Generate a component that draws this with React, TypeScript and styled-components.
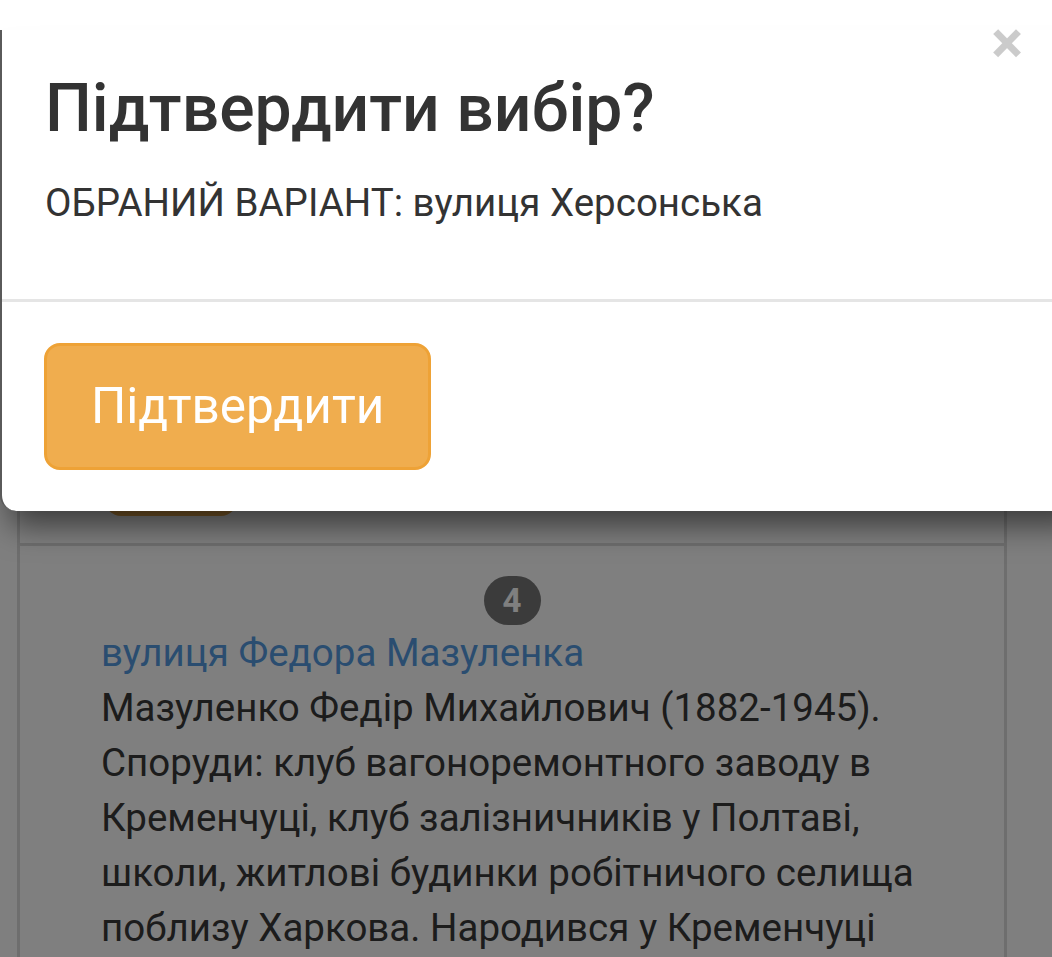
import React from 'react'
import styled, { createGlobalStyle } from 'styled-components'

const GlobalStyle = createGlobalStyle`
  html, body {
    margin: 0;
    padding: 0;
    background: #fff;
    overflow: hidden;
  }
  body {
    font-family: Roboto, "Noto Sans", "Liberation Sans", sans-serif;
    color: #333;
  }
`;

const Page = styled.div`
  display: flex;
  flex-direction: column;
  width: 100%;
  height: 957px;
  overflow: hidden;
  background: #fff;
`;

const TopSpace = styled.div`
  height: 30px;
  flex-shrink: 0;
  background: #fff;
`;

const Viewport = styled.div`
  position: relative;
  flex: 1;
`;

const List = styled.div`
  margin-left: 17px;
  width: 990px;
  display: flex;
  flex-direction: column;
`;

const Item = styled.div<{ $tall?: boolean }>`
  border: 3px solid #ddd;
  border-top-width: ${p => (p.$tall ? 0 : 3)}px;
  margin-top: ${p => (p.$tall ? 0 : -3)}px;
  display: flex;
  flex-direction: column;
  padding: ${p => (p.$tall ? '0 81px 27px 85px' : '30px 81px 40px')};
  min-height: ${p => (p.$tall ? '486px' : 'auto')};
  justify-content: ${p => (p.$tall ? 'flex-end' : 'flex-start')};
`;

const SmallButton = styled.span`
  display: block;
  width: 132px;
  height: 90px;
  background: #f0ad4e;
  border-radius: 16px;
`;

const BadgeRow = styled.div`
  display: flex;
  justify-content: center;
`;

const Badge = styled.span`
  display: inline-block;
  min-width: 19px;
  padding: 8px 19px;
  font-size: 33px;
  font-weight: 700;
  line-height: 1;
  color: #fff;
  text-align: center;
  background: #777;
  border-radius: 28px;
`;

const StreetLink = styled.a`
  color: #559ae0;
  text-decoration: none;
  font-size: 38.5px;
  line-height: 55px;
`;

const Description = styled.p`
  margin: 0;
  font-size: 38.5px;
  line-height: 55px;
  color: #383838;
`;

const Overlay = styled.div`
  position: absolute;
  inset: 0;
  background: rgba(0, 0, 0, 0.5);
`;

const Modal = styled.div`
  position: absolute;
  top: 0;
  left: 0;
  width: 1090px;
  background: #fff;
  border-left: 2px solid #5a5a5a;
  border-radius: 0 0 16px 16px;
  box-shadow: 0 24px 32px -10px rgba(0, 0, 0, 0.55);
`;

const Header = styled.div`
  position: relative;
  padding: 43px 41px 0 43px;
`;

const Title = styled.h4`
  margin: 0;
  font-size: 66px;
  font-weight: 500;
  line-height: 1.1;
  color: #333;
`;

const Close = styled.button`
  position: absolute;
  top: 0;
  right: 69px;
  padding: 0;
  border: 0;
  background: transparent;
  font-family: Roboto, "Liberation Sans", sans-serif;
  font-size: 60px;
  font-weight: 700;
  line-height: 26px;
  color: #000;
  opacity: 0.2;
`;

const Body = styled.div`
  padding: 29px 41px 69px 43px;
`;

const Selected = styled.p`
  margin: 0;
  font-size: 38.5px;
  line-height: 55px;
  color: #333;
`;

const Footer = styled.div`
  border-top: 3px solid #e5e5e5;
  padding: 41px 41px 41px 42px;
  display: flex;
`;

const ConfirmButton = styled.button`
  font-family: Roboto, "Liberation Sans", sans-serif;
  font-size: 49.5px;
  line-height: 66px;
  padding: 27.5px 44px;
  color: #fff;
  background: #f0ad4e;
  border: 3px solid #eea236;
  border-radius: 16px;
  cursor: pointer;
`;

export default function App() {
  return (
    <Page>
      <GlobalStyle />
      <TopSpace />
      <Viewport>
        <List>
          <Item $tall>
            <SmallButton />
          </Item>
          <Item>
            <BadgeRow>
              <Badge>4</Badge>
            </BadgeRow>
            <StreetLink href="#">вулиця Федора Мазуленка</StreetLink>
            <Description>
              Мазуленко Федір Михайлович (1882-1945). Споруди: клуб вагоноремонтного заводу в
              Кременчуці, клуб залізничників у Полтаві, школи, житлові будинки робітничого селища
              поблизу Харкова. Народився у Кременчуці
            </Description>
          </Item>
        </List>
        <Overlay />
        <Modal>
          <Header>
            <Close aria-label="Close">×</Close>
            <Title>Підтвердити вибір?</Title>
          </Header>
          <Body>
            <Selected>ОБРАНИЙ ВАРІАНТ: вулиця Херсонська</Selected>
          </Body>
          <Footer>
            <ConfirmButton>Підтвердити</ConfirmButton>
          </Footer>
        </Modal>
      </Viewport>
    </Page>
  )
}
